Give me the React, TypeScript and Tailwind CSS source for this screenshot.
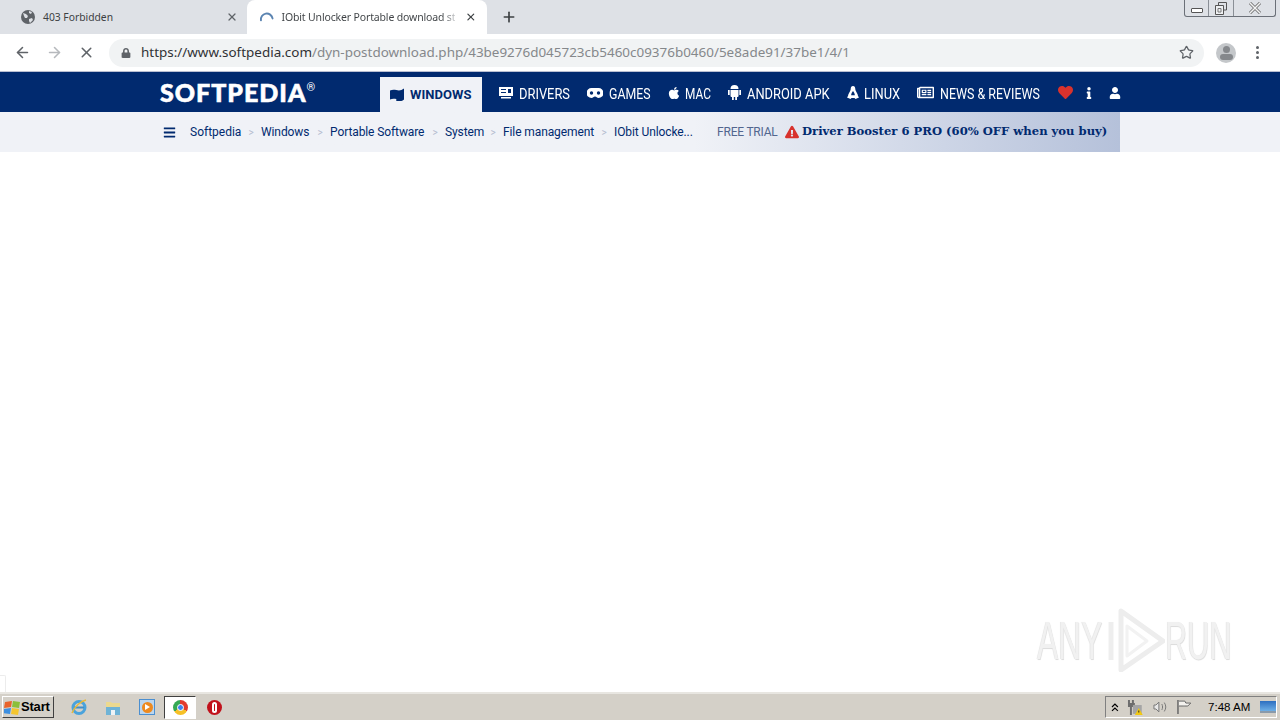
import React from "react";
import { ArrowLeft, ArrowRight, X, Plus, Star } from "lucide-react";
import {
  FaApple,
  FaBars,
  FaExclamationTriangle,
  FaHeart,
  FaInfo,
  FaLock,
  FaRegNewspaper,
  FaUser,
} from "react-icons/fa";

const NAV_FONT = { fontFamily: '"Roboto", "Liberation Sans", sans-serif' };
const TAB_FONT = { fontFamily: '"Noto Sans", sans-serif' };

function Globe() {
  return (
    <svg width="16" height="16" viewBox="0 0 16 16">
      <circle cx="8" cy="8" r="7" fill="#5f6368" />
      <path d="M3 4l3 1 2 2-1 2-2 0-1-2zM9 2l3 1-1 2-2-1zM9 10l3-1 1 2-3 3-1-2z" fill="#dee1e6" />
    </svg>
  );
}

function Tabs() {
  return (
    <div className="h-[34px] bg-[#dee1e6] flex items-end relative">
      <div className="w-[240px] h-[34px] pl-[20px] pr-[2px] flex items-center shrink-0">
        <Globe />
        <span className="ml-[7px] pt-[1px] text-[10.3px] text-[#3c4043] flex-1" style={TAB_FONT}>
          403 Forbidden
        </span>
        <X size={12} strokeWidth={2.5} className="text-[#5f6368]" />
      </div>
      <div className="w-[240px] h-[34px] bg-white rounded-t-[8px] ml-[7px] pl-[12px] pr-[10px] flex items-center shrink-0">
        <svg width="16" height="16" viewBox="0 0 16 16" fill="none">
          <path d="M2 11.500A6 6 0 0 1 14 9.500" stroke="#5b84b1" strokeWidth="2" strokeLinecap="round" />
        </svg>
        <span
          className="ml-[7px] mt-[1px] w-[174px] whitespace-nowrap text-[10.5px] tracking-[-0.15px] text-transparent bg-clip-text bg-gradient-to-r from-[#3c4043] from-[92%] to-[#c8cacc]"
          style={TAB_FONT}
        >
          IObit Unlocker Portable download st
        </span>
        <X size={12} strokeWidth={2.5} className="ml-[10px] text-[#3c4043]" />
      </div>
      <Plus size={16} strokeWidth={2.5} className="ml-[14px] mb-[9px] text-[#3c4043]" />
      {/* window buttons */}
      <div className="absolute right-[4px] top-0 w-[92px] h-[17px] flex border border-t-0 border-[#6b7078] rounded-b-[3px]">
        <div className="w-[24px] border-r border-[#8a8f96] flex items-center justify-center">
          <div className="w-[12px] h-[5px] mt-[5px] border border-[#555] rounded-[1px] bg-white" />
        </div>
        <div className="w-[25px] border-r border-[#8a8f96] flex items-center justify-center">
          <svg width="12" height="13" viewBox="0 0 12 13" fill="none">
            <path d="M3.500 3V.500h8V8H9" stroke="#555" />
            <path d="M.500 3.500h8v9h-8z" stroke="#555" fill="#eef0f2" />
            <path d="M3 6.500h3v3.500H3z" stroke="#777" />
          </svg>
        </div>
        <div className="flex-1 flex items-center justify-center">
          <svg width="14" height="12" viewBox="0 0 14 12">
            <path d="M2 1l10 10M12 1L2 11" stroke="#666" strokeWidth="3" fill="none" />
            <path d="M2 1l10 10M12 1L2 11" stroke="#f4f4f4" strokeWidth="1.500" fill="none" />
          </svg>
        </div>
      </div>
    </div>
  );
}

function Toolbar() {
  return (
    <div className="h-[38px] bg-white border-b border-[#b9bfd2] flex items-center">
      <ArrowLeft size={17} strokeWidth={2.2} className="ml-[14px] text-[#5f6368]" />
      <ArrowRight size={17} strokeWidth={2.2} className="ml-[15px] text-[#b6b9bd]" />
      <X size={17} strokeWidth={2.2} className="ml-[15px] text-[#5f6368]" />
      <div className="ml-[14px] h-[28px] w-[1095px] rounded-full bg-[#f1f3f4] flex items-center">
        <FaLock size={10} className="ml-[12px] text-[#5f6368]" />
        <span className="ml-[10px] text-[13.45px] text-[#85888b] flex-1" style={TAB_FONT}>
          <span className="text-[#303134]">https://www.softpedia.com</span>/dyn-postdownload.php/43be9276d045723cb5460c09376b0460/5e8ade91/37be1/4/1
        </span>
        <Star size={15} strokeWidth={2} className="mr-[10px] text-[#5f6368]" />
      </div>
      <div className="ml-[12px] w-[20px] h-[20px] rounded-full bg-[#c4c7ca] flex flex-col items-center justify-center overflow-hidden">
        <div className="w-[7px] h-[7px] rounded-full bg-[#85888c]" />
        <div className="w-[13px] h-[6px] mt-[1px] rounded-full bg-[#85888c]" />
      </div>
      <div className="ml-[20px] flex flex-col gap-[2px]">
        <div className="w-[3px] h-[3px] rounded-full bg-[#5f6368]" />
        <div className="w-[3px] h-[3px] rounded-full bg-[#5f6368]" />
        <div className="w-[3px] h-[3px] rounded-full bg-[#5f6368]" />
      </div>
    </div>
  );
}

const NAV_ITEMS = [
  {
    label: "DRIVERS",
    iconW: "w-[20px]",
    labelW: "w-[51px]",
    scale: "scale-x-[0.92]",
    icon: (
      <svg width="14" height="12" viewBox="0 0 14 12">
        <path d="M0 0h14v9H0zM2 2v1h5V2zM2 5v1h5V5zM9 2v4h3V2zM2 10h10v1.500H2z" fill="#fff" fillRule="evenodd" />
      </svg>
    ),
  },
  {
    label: "GAMES",
    iconW: "w-[22px]",
    labelW: "w-[41px]",
    scale: "scale-x-[0.88]",
    icon: (
      <svg width="16" height="10" viewBox="0 0 16 10">
        <path d="M4.500 0h7a4.500 4.500 0 0 1 0 10c-1.500 0-2-1.500-3.500-1.500S6 10 4.500 10a4.500 4.500 0 0 1 0-10z" fill="#fff" />
        <circle cx="4.500" cy="5" r="1.700" fill="#012a6f" />
        <circle cx="11.500" cy="5" r="1.700" fill="#012a6f" />
      </svg>
    ),
  },
  { label: "MAC", iconW: "w-[18px]", labelW: "w-[26px]", scale: "scale-x-[0.85]", icon: <FaApple size={14} className="text-white" /> },
  {
    label: "ANDROID APK",
    iconW: "w-[19px]",
    labelW: "w-[83px]",
    scale: "scale-x-[0.92]",
    icon: (
      <svg width="13" height="15" viewBox="0 0 13 15">
        <path d="M2.500 4a4 4 0 0 1 8 0zM2.500 5h8v6a1 1 0 0 1-1 1h-6a1 1 0 0 1-1-1zM0 5h1.700v5H0zM11.300 5H13v5h-1.700zM4 12h1.800v3H4zM7.200 12H9v3H7.200z" fill="#fff" />
      </svg>
    ),
  },
  {
    label: "LINUX",
    iconW: "w-[17px]",
    labelW: "w-[36px]",
    scale: "scale-x-[0.92]",
    icon: (
      <svg width="12" height="13" viewBox="0 0 12 13">
        <path d="M6 0c1.800 0 2.300 1.500 2.300 3.200 0 1.800 2.700 4.300 2.700 6.800l1 1.500L8.500 13l-1-1h-3l-1 1L0 11.500 1 10c0-2.500 2.700-5 2.700-6.800C3.700 1.500 4.200 0 6 0z" fill="#fff" />
        <path d="M6 5c-1 1.200-1.800 2.700-1.800 4.200h3.600C7.800 7.700 7 6.200 6 5z" fill="#012a6f" />
      </svg>
    ),
  },
  {
    label: "NEWS & REVIEWS",
    iconW: "w-[23px]",
    labelW: "w-[100px]",
    scale: "scale-x-[0.89]",
    icon: <FaRegNewspaper size={17} className="text-white" />,
  },
];

function SiteNav() {
  return (
    <div className="h-[40px] bg-[#012a6f] flex">
      <div className="w-[160px] shrink-0" />
      <div className="w-[220px] shrink-0 flex items-start pt-[5px]">
        <span
          className="text-white text-[25px] font-black leading-[30px] tracking-[1px] [-webkit-text-stroke:0.6px_white]"
          style={{ fontFamily: '"Lato", sans-serif' }}
        >
          SOFTPEDIA
        </span>
        <span className="text-white text-[11px] leading-[10px] mt-[6px]" style={NAV_FONT}>®</span>
      </div>
      <div className="mt-[5px] h-[35px] w-[102px] bg-[#f0f2f7] flex items-center pl-[10px] shrink-0">
        <svg width="14" height="13" viewBox="0 0 14 13">
          <path d="M0 2.500C2 1.500 4 1.500 6.300 2v9c-2.300-.5-4.300-.5-6.300.5zM6.300 2c2.700.8 5.200.5 7.700-1.500v11c-2.500 2-5 2.300-7.700 1.500z" fill="#012a6f" />
        </svg>
        <span className="ml-[6px] text-[#012a6f] text-[13px] font-bold tracking-[0.05px]" style={NAV_FONT}>WINDOWS</span>
      </div>
      <div className="flex items-center pt-[1px]">
        {NAV_ITEMS.map((item) => (
          <div key={item.label} className="flex items-center ml-[17px]">
            <div className={`${item.iconW} flex items-center shrink-0`}>{item.icon}</div>
            <div className={`${item.labelW} shrink-0`}>
              <span
                className={`inline-block origin-left ${item.scale} text-white text-[14px] whitespace-nowrap`}
                style={NAV_FONT}
              >
                {item.label}
              </span>
            </div>
          </div>
        ))}
        <FaHeart size={15} className="ml-[18px] text-[#d8322d]" />
        <FaInfo size={12} className="ml-[10px] text-white" />
        <FaUser size={12} className="ml-[14px] text-white" />
      </div>
    </div>
  );
}

const CRUMBS = [
  { label: "Windows", w: "w-[49px]" },
  { label: "Portable Software", w: "w-[95px]" },
  { label: "System", w: "w-[38px]" },
  { label: "File management", w: "w-[91px]" },
  { label: "IObit Unlocke...", w: "w-[81px]" },
];

function SubNav() {
  return (
    <div className="h-[40px] flex bg-[#f0f2f7]">
      <div className="w-[1120px] flex items-center bg-gradient-to-r from-[#f0f2f7] from-[62%] to-[#b5c1da]" style={NAV_FONT}>
        <FaBars size={13} className="ml-[163px] text-[#012a6f] shrink-0" />
        <span className="ml-[14px] w-[51px] text-[12px] text-[#012a6f]">Softpedia</span>
        {CRUMBS.map((c) => (
          <React.Fragment key={c.label}>
            <span className="w-[20px] text-center text-[10px] text-[#b3bbcf]">&gt;</span>
            <span className={`${c.w} text-[12px] tracking-[-0.1px] text-[#012a6f] whitespace-nowrap`}>{c.label}</span>
          </React.Fragment>
        ))}
        <span className="ml-[22px] w-[59px] text-[12px] tracking-[-0.2px] text-[#52668f] whitespace-nowrap">FREE TRIAL</span>
        <FaExclamationTriangle size={14} className="ml-[9px] text-[#d8322d] shrink-0" />
        <span className="ml-[3px] text-[11.6px] font-bold text-[#012a6f] whitespace-nowrap" style={{ fontFamily: '"DejaVu Serif", serif' }}>
          Driver Booster 6 PRO (60% OFF when you buy)
        </span>
      </div>
    </div>
  );
}

function Taskbar() {
  return (
    <div className="h-[28px] bg-[#d4d0c8] border-t-2 border-t-[#e8e6e1] flex items-center" style={{ fontFamily: '"Liberation Sans", sans-serif' }}>
      <div className="ml-[2px] w-[52px] h-[22px] flex items-center border border-[#fff] border-r-[#404040] border-b-[#404040]">
        <svg width="17" height="16" viewBox="0 0 17 16" className="ml-[1px]">
          <path d="M1 3l7-1-1 6-7 1z" fill="#e8632b" />
          <path d="M9 2l7 1-1 6-7-1z" fill="#8bbf3a" />
          <path d="M0 10l7-1-1 6-7-1z" fill="#3d8fe0" />
          <path d="M8 9l7 1-1 6-7-1z" fill="#f4c52e" />
        </svg>
        <span className="text-[13px] font-bold text-black tracking-[-0.2px]">Start</span>
      </div>
      <svg width="18" height="18" viewBox="0 0 18 18" className="ml-[16px]">
        <circle cx="9" cy="9.500" r="6" fill="none" stroke="#4aa3dc" strokeWidth="3" />
        <path d="M4 9.500h10" stroke="#3f8fc9" strokeWidth="2" />
        <path d="M2 15C5 8 11 3 16 2" stroke="#e8b93a" strokeWidth="1.500" fill="none" />
      </svg>
      <svg width="16" height="17" viewBox="0 0 16 17" className="ml-[17px]">
        <path d="M1 3h5l1 1h8v12H1z" fill="#ecd98f" />
        <path d="M1 8h14v8H1z" fill="#6fb3d6" />
        <path d="M6 11h4v5H6z" fill="#eef3f6" />
      </svg>
      <div className="ml-[18px] w-[16px] h-[16px] border border-[#4b8fd0] bg-[#bcd6ee] flex items-center justify-center">
        <div className="w-[11px] h-[11px] rounded-full bg-[#ee8a1f] flex items-center justify-center">
          <div className="w-0 h-0 border-y-[3px] border-y-transparent border-l-[5px] border-l-white ml-[1px]" />
        </div>
      </div>
      <div className="ml-[9px] w-[32px] h-[23px] bg-white border border-[#404040] border-r-white border-b-white flex items-center justify-center">
        <div className="w-[15px] h-[15px] rounded-full bg-[conic-gradient(#e33b2e_0_33%,#f6c026_33%_66%,#35a853_66%)] flex items-center justify-center">
          <div className="w-[7px] h-[7px] rounded-full bg-[#3f82ee] border border-white" />
        </div>
      </div>
      <div className="ml-[11px] w-[15px] h-[15px] rounded-full bg-[#c1121c] flex items-center justify-center">
        <div className="w-[5px] h-[11px] rounded-full border-2 border-white" />
      </div>
      <div className="ml-auto mr-[3px] w-[172px] h-[22px] flex items-center border border-[#808080] border-r-white border-b-white">
        <svg width="8" height="9" viewBox="0 0 8 9" fill="none" className="ml-[5px]">
          <path d="M1 4l3-3 3 3M1 8l3-3 3 3" stroke="#000" strokeWidth="1.200" />
        </svg>
        <svg width="17" height="17" viewBox="0 0 17 17" className="ml-[8px]">
          <path d="M1 1h2v3h2V1h2v3h1v4H5v8H3V8H1z" fill="#6d6d6d" />
          <path d="M6 6h9v9H6z" fill="#a5a5a5" />
          <path d="M12 9l4 7H8z" fill="#f2c811" />
          <path d="M11.500 11.500h1v2h-1z" fill="#222" />
        </svg>
        <svg width="16" height="16" viewBox="0 0 16 16" className="ml-[8px]" fill="none">
          <path d="M2 6h2l3-3v10l-3-3H2z" fill="#e8e8e8" stroke="#777" />
          <path d="M10 5c1 2 1 4 0 6M12.500 3.500c2 3 2 6 0 9" stroke="#777" />
        </svg>
        <svg width="16" height="16" viewBox="0 0 16 16" className="ml-[9px]" fill="none">
          <path d="M2 1v14" stroke="#666" strokeWidth="1.500" />
          <path d="M3 2h6l1 2h5l-3 3H9L8 7H3" stroke="#666" fill="#f4f2ee" />
        </svg>
        <span className="ml-[16px] mt-[1px] text-[11.5px] text-black whitespace-nowrap">7:48 AM</span>
        <div className="ml-[10px] w-[16px] h-[12px] bg-gradient-to-b from-[#2d6fc0] to-[#6fb0e6] border-b-2 border-[#8a9aaa]" />
      </div>
    </div>
  );
}

export default function App() {
  return (
    <div className="w-[1280px] h-[720px] overflow-hidden flex flex-col bg-white relative">
      <Tabs />
      <Toolbar />
      <SiteNav />
      <SubNav />
      <div className="flex-1" />
      <Taskbar />
      {/* leftover tooltip corner at the bottom left */}
      <div className="absolute left-0 top-[675px] w-[6px] h-[17px] border-t border-r border-[#ececec] rounded-tr-[2px]" />
      {/* sandbox watermark */}
      <div
        className="absolute left-[1037px] top-[608px] h-[64px] flex items-center text-[#f1f1f1] text-[53px] leading-none"
        style={{ fontFamily: '"Liberation Sans", sans-serif', textShadow: "1px 1px 1px #dcdcdc, -1px 0 1px #e4e4e4" }}
      >
        <div className="w-[66px]">
          <span className="inline-block origin-left scale-x-[0.6]">ANY</span>
        </div>
        <svg width="62" height="64" viewBox="0 0 62 64" fill="none">
          <path d="M8 14v38" stroke="#eeeeee" strokeWidth="5" />
          <path d="M18 3l42 30-42 29z" stroke="#ededed" strokeWidth="5" strokeLinejoin="round" />
          <path d="M24 18v30l20-15z" stroke="#f2f2f2" strokeWidth="3" strokeLinejoin="round" />
        </svg>
        <div className="w-[67px]">
          <span className="inline-block origin-left scale-x-[0.58]">RUN</span>
        </div>
      </div>
    </div>
  );
}
